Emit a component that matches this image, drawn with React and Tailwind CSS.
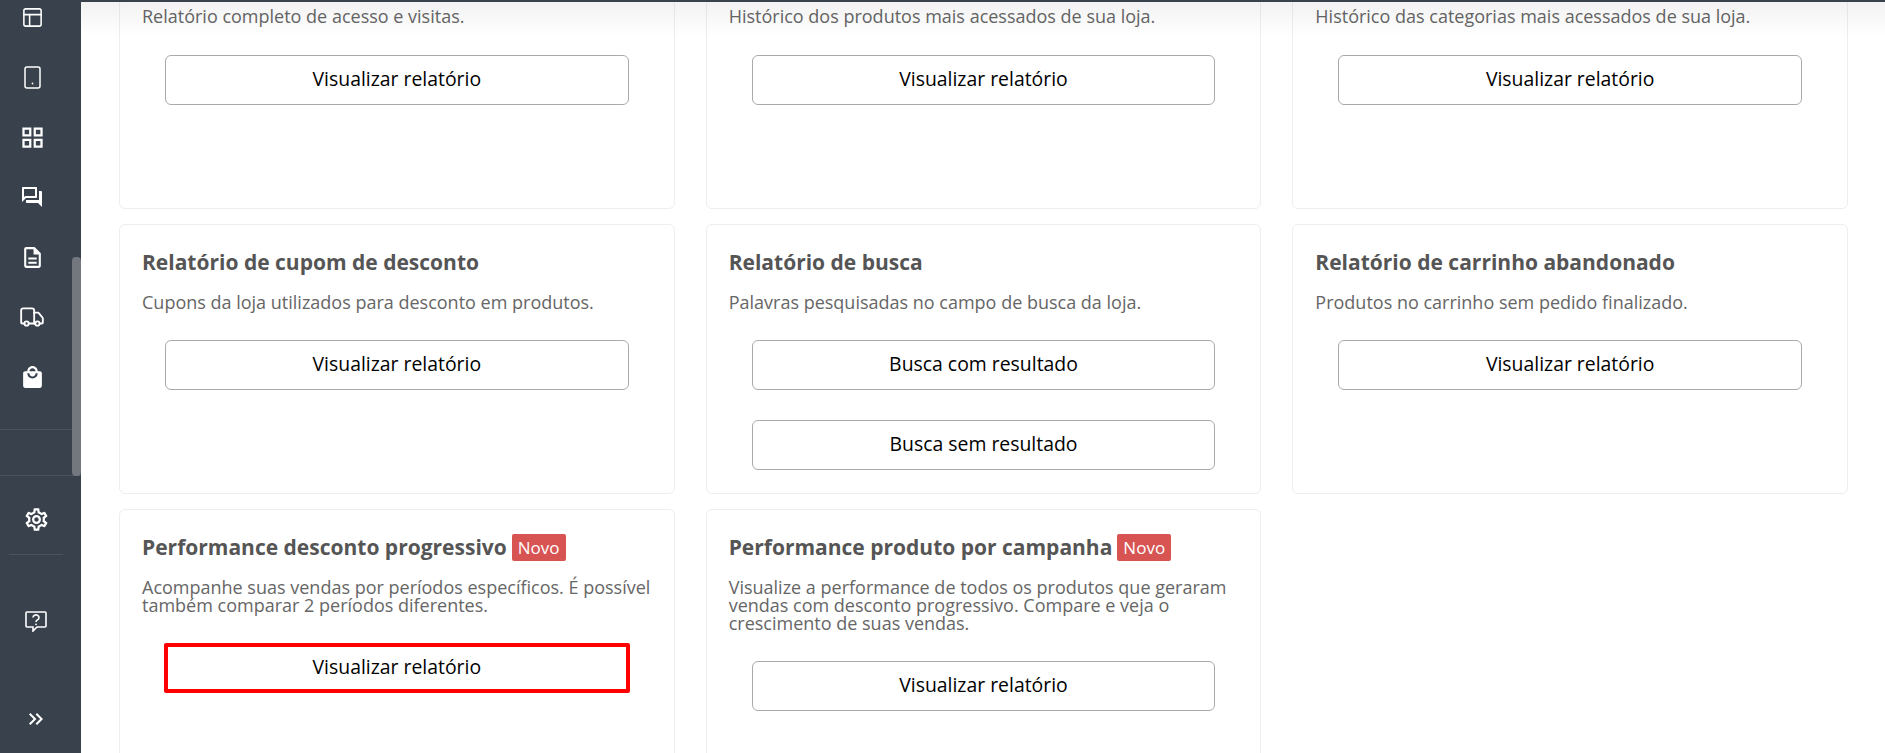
import {
  MdOutlineGridView,
  MdOutlineQuestionAnswer,
  MdOutlineDescription,
  MdLocalMall,
  MdOutlineSettings,
  MdKeyboardDoubleArrowRight,
} from 'react-icons/md';
import { PanelsTopLeft, Truck } from 'lucide-react';

function PhoneIcon() {
  return (
    <svg width="17" height="23" viewBox="0 0 17 23" fill="none" stroke="currentColor" strokeWidth="1.5">
      <rect x="1" y="1" width="15" height="21" rx="2" />
      <circle cx="8.5" cy="17.5" r="0.9" fill="currentColor" stroke="none" />
    </svg>
  );
}

function HelpIcon() {
  return (
    <svg width="22" height="21" viewBox="0 0 22 21" fill="none" stroke="currentColor" strokeWidth="1.6">
      <path d="M2 1h18a1 1 0 0 1 1 1v13a1 1 0 0 1-1 1h-8l-4 4v-4H2a1 1 0 0 1-1-1V2a1 1 0 0 1 1-1z" />
      <path d="M8 6.5a3 2.6 0 1 1 4.6 2.2c-1 .7-1.6 1.2-1.6 2.3" />
      <circle cx="11" cy="13.3" r="0.9" fill="currentColor" stroke="none" />
    </svg>
  );
}

const NAV_ICONS = [
  <PhoneIcon />,
  <MdOutlineGridView size={27} />,
  <MdOutlineQuestionAnswer size={24} />,
  <MdOutlineDescription size={25} />,
  <Truck size={26} strokeWidth={1.7} />,
  <MdLocalMall size={25} />,
];

function Sidebar() {
  return (
    <aside className="relative flex h-full w-[81px] shrink-0 flex-col bg-[#39424c] text-white">
      <div className="h-[430px] border-b border-[#4a545e] pr-[17px]">
        <div className="flex h-[29px] items-end justify-center">
          <PanelsTopLeft size={23} strokeWidth={1.6} />
        </div>
        <div className="pt-[3px]">
          {NAV_ICONS.map((icon, i) => (
            <div key={i} className="mt-[30px] flex h-[30px] items-center justify-center">
              {icon}
            </div>
          ))}
        </div>
      </div>
      <div className="h-[46px] border-b border-[#4a545e]" />
      <div className="ml-[9px] flex h-[79px] w-[54px] items-center justify-center border-b border-[#4a545e] pt-[9px]">
        <MdOutlineSettings size={27} />
      </div>
      <div className="mt-[51px] flex h-[30px] w-[72px] items-center justify-center">
        <HelpIcon />
      </div>
      <div className="mt-[68px] flex h-[30px] w-[72px] items-center justify-center">
        <MdKeyboardDoubleArrowRight size={24} />
      </div>
      <div className="absolute right-0 top-[257px] h-[219px] w-[9px] rounded-[4px] bg-[#73787e]" />
    </aside>
  );
}

function ReportButton({ label = 'Visualizar relatório', highlighted = false }) {
  return (
    <button
      className={
        highlighted
          ? 'mx-[22px] flex h-[50px] w-[calc(100%-44px)] items-center justify-center rounded-[2px] border-[4px] border-[#ff0000] bg-white pb-[2px] text-[19.4px] text-black'
          : 'mx-[23px] flex h-[50px] w-[calc(100%-46px)] items-center justify-center rounded-[6px] border border-[#aaaaaa] bg-white pb-[2px] text-[19.4px] text-black'
      }
    >
      {label}
    </button>
  );
}

function ReportCard({ title, badge, description, children, className = '' }) {
  return (
    <div className={`rounded-[6px] border border-[#eeeeee] bg-white px-[22px] ${className}`}>
      {title && (
        <h3 className="mt-[24px] flex h-[27px] items-center text-[21px] font-bold leading-[27px] text-[#555555]">
          {title}
          {badge && (
            <span className="ml-[5px] flex h-[27px] items-center rounded-[2px] bg-[#d75453] px-[6px] text-[17px] font-normal text-white">
              {badge}
            </span>
          )}
        </h3>
      )}
      <p className={`text-[18px] leading-[18px] text-[#666666] ${title ? 'mt-[17px]' : 'mt-[8px]'}`}>{description}</p>
      <div className={`flex flex-col gap-[30px] ${title ? 'mt-[29px]' : 'mt-[30px]'}`}>{children}</div>
    </div>
  );
}

export default function App() {
  return (
    <div className="flex h-[753px] w-[1885px] overflow-hidden bg-white font-['Open_Sans',sans-serif]">
      <Sidebar />
      <main className="relative flex-1 overflow-hidden">
        <div className="absolute inset-x-0 top-0 z-10 h-[2px] bg-[#39424c]" />
        <div className="pointer-events-none absolute inset-x-0 top-[2px] z-10 h-[34px] bg-gradient-to-b from-[#0000000d] to-transparent" />
        <div className="ml-[38px] grid w-[1729px] grid-cols-3 gap-x-[31px] gap-y-[15px]">
          <ReportCard className="-mt-[2px] h-[211px]" description="Relatório completo de acesso e visitas.">
            <ReportButton />
          </ReportCard>
          <ReportCard className="-mt-[2px] h-[211px]" description="Histórico dos produtos mais acessados de sua loja.">
            <ReportButton />
          </ReportCard>
          <ReportCard className="-mt-[2px] h-[211px]" description="Histórico das categorias mais acessados de sua loja.">
            <ReportButton />
          </ReportCard>

          <ReportCard className="h-[270px]" title="Relatório de cupom de desconto" description="Cupons da loja utilizados para desconto em produtos.">
            <ReportButton />
          </ReportCard>
          <ReportCard className="h-[270px]" title="Relatório de busca" description="Palavras pesquisadas no campo de busca da loja.">
            <ReportButton label="Busca com resultado" />
            <ReportButton label="Busca sem resultado" />
          </ReportCard>
          <ReportCard className="h-[270px]" title="Relatório de carrinho abandonado" description="Produtos no carrinho sem pedido finalizado.">
            <ReportButton />
          </ReportCard>

          <ReportCard
            className="h-[270px]"
            title="Performance desconto progressivo"
            badge="Novo"
            description="Acompanhe suas vendas por períodos específicos. É possível também comparar 2 períodos diferentes."
          >
            <ReportButton highlighted />
          </ReportCard>
          <ReportCard
            className="h-[270px]"
            title="Performance produto por campanha"
            badge="Novo"
            description="Visualize a performance de todos os produtos que geraram vendas com desconto progressivo. Compare e veja o crescimento de suas vendas."
          >
            <ReportButton />
          </ReportCard>
        </div>
      </main>
    </div>
  );
}
